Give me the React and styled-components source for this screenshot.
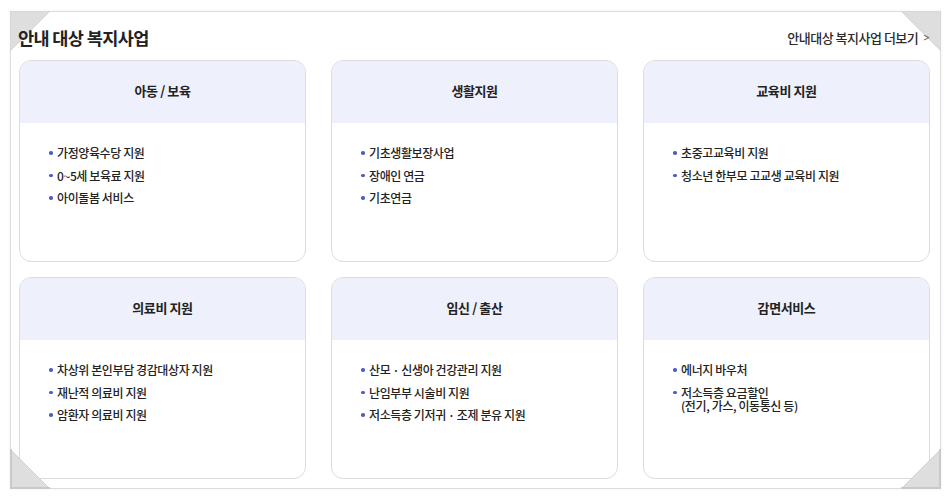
import React from 'react';
import styled, { createGlobalStyle } from 'styled-components';

const categories = [
  { title: '아동 / 보육', items: ['가정양육수당 지원', '0~5세 보육료 지원', '아이돌봄 서비스'] },
  { title: '생활지원', items: ['기초생활보장사업', '장애인 연금', '기초연금'] },
  { title: '교육비 지원', items: ['초중고교육비 지원', '청소년 한부모 고교생 교육비 지원'] },
  { title: '의료비 지원', items: ['차상위 본인부담 경감대상자 지원', '재난적 의료비 지원', '암환자 의료비 지원'] },
  { title: '임신 / 출산', items: ['산모 · 신생아 건강관리 지원', '난임부부 시술비 지원', '저소득층 기저귀 · 조제 분유 지원'] },
  { title: '감면서비스', items: ['에너지 바우처', '저소득층 요금할인\n(전기, 가스, 이동통신 등)'] },
];

function Corner({ pos }) {
  const shapes = {
    tl: { points: '0,0 40,0 0,40', edge: null },
    tr: { points: '0,0 40,0 40,40', edge: null },
    bl: { points: '0,0 0,40 40,40', edge: 'M1 0 L1 39 L40 39' },
    br: { points: '40,0 40,40 0,40', edge: 'M39 0 L39 39 L0 39' },
  };
  const s = shapes[pos];
  return (
    <CornerBox $pos={pos}>
      <svg width="40" height="40" viewBox="0 0 40 40">
        <polygon points={s.points} fill="#dedede" stroke="#d2d2d2" strokeWidth="1" />
        {s.edge && <path d={s.edge} fill="none" stroke="#c9c9c9" strokeWidth="2" />}
      </svg>
    </CornerBox>
  );
}

export default function App() {
  return (
    <>
      <GlobalStyle />
      <Page>
        <Frame>
          <Corner pos="tl" />
          <Corner pos="tr" />
          <Corner pos="bl" />
          <Corner pos="br" />
          <TitleRow>
            <Title>안내 대상 복지사업</Title>
            <MoreLink href="#">
              안내대상 복지사업 더보기<Arrow>&gt;</Arrow>
            </MoreLink>
          </TitleRow>
          <CardGrid>
            {categories.map((c) => (
              <Card key={c.title}>
                <CardHead>{c.title}</CardHead>
                <ItemList>
                  {c.items.map((it) => (
                    <Item key={it}>{it}</Item>
                  ))}
                </ItemList>
              </Card>
            ))}
          </CardGrid>
        </Frame>
      </Page>
    </>
  );
}

const GlobalStyle = createGlobalStyle`
  body {
    margin: 0;
    background: #fff;
    font-family: "Noto Sans CJK KR", "Noto Sans", sans-serif;
    color: #333;
  }
  * { box-sizing: border-box; }
`;

const Page = styled.div`
  width: 951px;
  height: 499px;
  padding: 11px 11px 0 10px;
`;

const Frame = styled.div`
  position: relative;
  width: 931px;
  height: 478px;
  border: 1px solid #dcdcdc;
  background: #fff;
  box-shadow: 0 0 3px rgba(0, 0, 0, 0.06);
  padding: 0 10px 0 8px;
`;

const CornerBox = styled.div`
  position: absolute;
  width: 40px;
  height: 40px;
  line-height: 0;
  pointer-events: none;
  ${({ $pos }) => ($pos[0] === 't' ? 'top: -1px;' : 'bottom: -1px;')}
  ${({ $pos }) => ($pos[1] === 'l' ? 'left: -1px;' : 'right: -1px;')}
`;

const TitleRow = styled.div`
  height: 48px;
  display: flex;
  align-items: center;
  justify-content: space-between;
  padding-top: 2px;
`;

const Title = styled.h2`
  margin: 0;
  margin-left: -1px;
  font-size: 17.5px;
  font-weight: 700;
  letter-spacing: -0.6px;
  color: #222;
  position: relative;
  z-index: 1;
`;

const MoreLink = styled.a`
  font-size: 13px;
  font-weight: 500;
  color: #2a2a2a;
  text-decoration: none;
  letter-spacing: -0.5px;
  display: flex;
  align-items: center;
  margin-right: -1px;
  position: relative;
  z-index: 1;
`;

const Arrow = styled.span`
  margin-left: 4px;
  font-family: "DejaVu Sans", sans-serif;
  font-size: 11px;
  color: #555;
  transform: scaleX(0.7);
`;

const CardGrid = styled.div`
  display: grid;
  grid-template-columns: repeat(3, 287px);
  grid-auto-rows: 202px;
  column-gap: 25px;
  row-gap: 15px;
`;

const Card = styled.div`
  border: 1px solid #dcdcdc;
  border-radius: 12px;
  overflow: hidden;
  background: #fff;
`;

const CardHead = styled.div`
  height: 62px;
  padding-bottom: 3px;
  background: #eef0fb;
  display: flex;
  align-items: center;
  justify-content: center;
  font-size: 13px;
  font-weight: 700;
  color: #222;
  letter-spacing: -0.4px;
`;

const ItemList = styled.ul`
  list-style: none;
  margin: 0;
  padding: 23px 0 0 29px;
  display: flex;
  flex-direction: column;
  gap: 9.5px;
`;

const Item = styled.li`
  position: relative;
  padding-left: 8px;
  font-size: 12px;
  font-weight: 500;
  line-height: 13px;
  letter-spacing: -0.4px;
  color: #222;
  white-space: pre-line;

  &::before {
    content: '';
    position: absolute;
    left: 0;
    top: 5px;
    width: 3.5px;
    height: 3.5px;
    border-radius: 50%;
    background: #4c5cc8;
  }
`;
